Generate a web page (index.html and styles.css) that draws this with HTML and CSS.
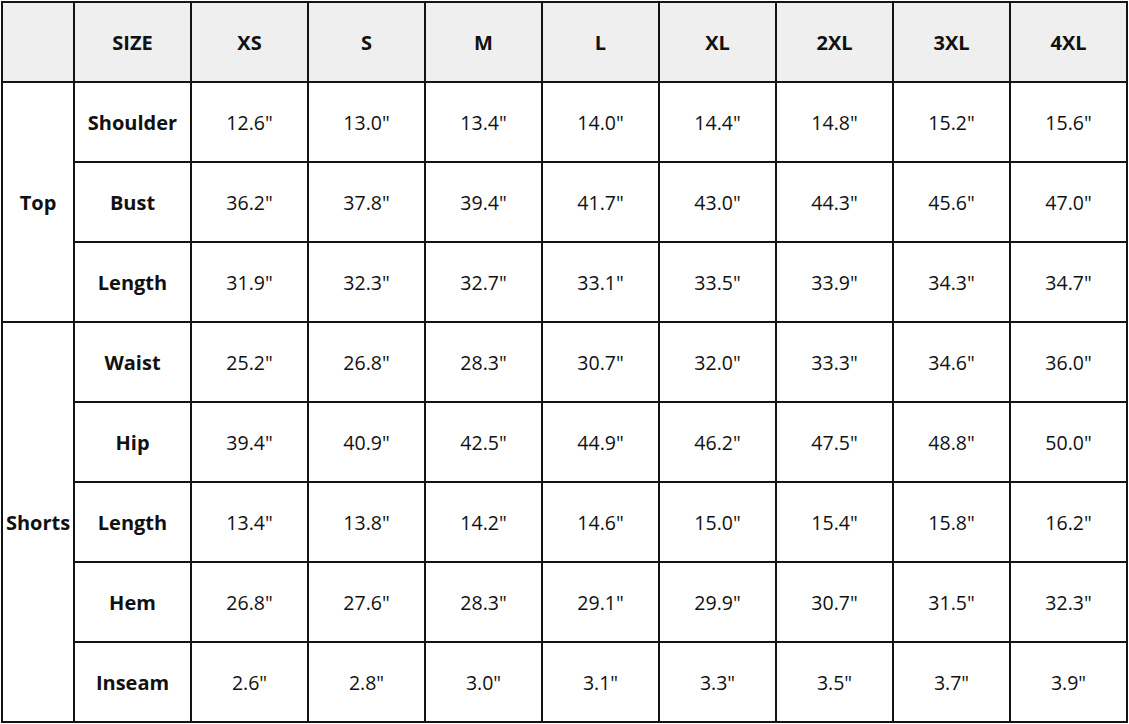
FILE: index.html
```html
<!DOCTYPE html>
<html>
<head>
<meta charset="utf-8">
<link rel="stylesheet" href="styles.css">
</head>
<body>
<div class="chart">
  <div class="cell head"></div>
  <div class="cell head b">SIZE</div>
  <div class="cell head b">XS</div>
  <div class="cell head b">S</div>
  <div class="cell head b">M</div>
  <div class="cell head b">L</div>
  <div class="cell head b">XL</div>
  <div class="cell head b">2XL</div>
  <div class="cell head b">3XL</div>
  <div class="cell head b">4XL</div>

  <div class="cell b group top">Top</div>
  <div class="cell b">Shoulder</div>
  <div class="cell">12.6"</div><div class="cell">13.0"</div><div class="cell">13.4"</div><div class="cell">14.0"</div><div class="cell">14.4"</div><div class="cell">14.8"</div><div class="cell">15.2"</div><div class="cell">15.6"</div>

  <div class="cell b">Bust</div>
  <div class="cell">36.2"</div><div class="cell">37.8"</div><div class="cell">39.4"</div><div class="cell">41.7"</div><div class="cell">43.0"</div><div class="cell">44.3"</div><div class="cell">45.6"</div><div class="cell">47.0"</div>

  <div class="cell b">Length</div>
  <div class="cell">31.9"</div><div class="cell">32.3"</div><div class="cell">32.7"</div><div class="cell">33.1"</div><div class="cell">33.5"</div><div class="cell">33.9"</div><div class="cell">34.3"</div><div class="cell">34.7"</div>

  <div class="cell b group shorts">Shorts</div>
  <div class="cell b">Waist</div>
  <div class="cell">25.2"</div><div class="cell">26.8"</div><div class="cell">28.3"</div><div class="cell">30.7"</div><div class="cell">32.0"</div><div class="cell">33.3"</div><div class="cell">34.6"</div><div class="cell">36.0"</div>

  <div class="cell b">Hip</div>
  <div class="cell">39.4"</div><div class="cell">40.9"</div><div class="cell">42.5"</div><div class="cell">44.9"</div><div class="cell">46.2"</div><div class="cell">47.5"</div><div class="cell">48.8"</div><div class="cell">50.0"</div>

  <div class="cell b">Length</div>
  <div class="cell">13.4"</div><div class="cell">13.8"</div><div class="cell">14.2"</div><div class="cell">14.6"</div><div class="cell">15.0"</div><div class="cell">15.4"</div><div class="cell">15.8"</div><div class="cell">16.2"</div>

  <div class="cell b">Hem</div>
  <div class="cell">26.8"</div><div class="cell">27.6"</div><div class="cell">28.3"</div><div class="cell">29.1"</div><div class="cell">29.9"</div><div class="cell">30.7"</div><div class="cell">31.5"</div><div class="cell">32.3"</div>

  <div class="cell b">Inseam</div>
  <div class="cell">2.6"</div><div class="cell">2.8"</div><div class="cell">3.0"</div><div class="cell">3.1"</div><div class="cell">3.3"</div><div class="cell">3.5"</div><div class="cell">3.7"</div><div class="cell">3.9"</div>
</div>
</body>
</html>
```

FILE: styles.css
```css
html, body {
  margin: 0;
  padding: 0;
  background: #ffffff;
}

body {
  padding: 1px 0 0 1px;
  font-family: "Segoe UI", "Open Sans", "Noto Sans", sans-serif;
  color: #111111;
}

.chart {
  width: 1127px;
  box-sizing: border-box;
  padding: 2px;
  background: #141414;
  display: grid;
  grid-template-columns: 70px repeat(9, 115px);
  grid-template-rows: repeat(9, 78px);
  gap: 2px;
}

.cell {
  background: #ffffff;
  display: flex;
  align-items: center;
  justify-content: center;
  padding-top: 2px;
  box-sizing: border-box;
  font-size: 19.5px;
  line-height: 1;
  white-space: nowrap;
}

.head {
  background: #efefef;
}

.b {
  font-weight: 700;
  font-size: 20px;
}

.group {
  grid-column: 1;
}

.top {
  grid-row: 2 / span 3;
}

.shorts {
  grid-row: 5 / span 5;
}
```
